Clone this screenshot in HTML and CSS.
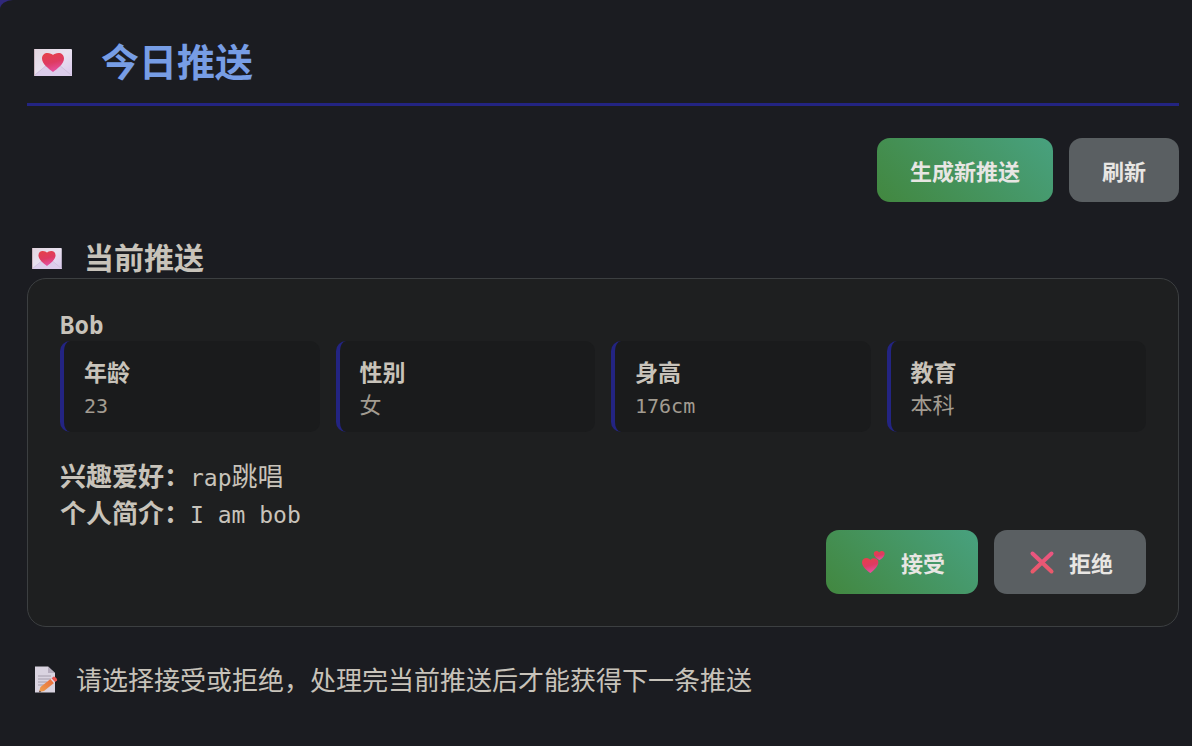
FILE: index.html
```
<!DOCTYPE html>
<html lang="zh-CN">
<head>
    <meta charset="UTF-8">
    <meta name="viewport" content="width=device-width, initial-scale=1.0">
    <title>今日推送</title>
    <link rel="stylesheet" href="styles.css">
</head>
<body>

<!-- 公用的信封图标 -->
<svg class="defs" width="0" height="0" aria-hidden="true">
    <defs>
        <linearGradient id="paper" x1="0" y1="0" x2="1" y2="1">
            <stop offset="0" stop-color="#e2d5df"/>
            <stop offset="0.5" stop-color="#e9e1f0"/>
            <stop offset="1" stop-color="#d9c8ec"/>
        </linearGradient>
        <linearGradient id="heart" x1="0.3" y1="0" x2="0.6" y2="1">
            <stop offset="0" stop-color="#e5404b"/>
            <stop offset="0.5" stop-color="#de3b62"/>
            <stop offset="1" stop-color="#e652a8"/>
        </linearGradient>
        <symbol id="letter" viewBox="0 0 38 27">
            <rect width="38" height="27" rx="1" fill="url(#paper)"/>
            <path d="M0 26 L14 15 H24 L38 26 V27 H0z" fill="#dccdeb"/>
            <path d="M1 26 L14 15 M37 26 L24 15" stroke="#c8bad4" stroke-width="0.7" fill="none"/>
            <path d="M0 0 V27" stroke="#cbb5bf" stroke-width="2"/>
            <path d="M19 23 C15 20 8 15 8 9.500 C8 6 10.500 4 13.500 4 C16 4 18 5 19 6 C20 5 22 4 24.500 4 C27.500 4 30 6 30 9.500 C30 15 23 20 19 23z" fill="url(#heart)"/>
        </symbol>
    </defs>
</svg>

<div class="container">
    <h1 class="page-title">
        <svg class="title-icon" aria-hidden="true"><use href="#letter"/></svg>
        今日推送
    </h1>

    <div class="actions">
        <button type="button" class="btn btn-success">生成新推送</button>
        <button type="button" class="btn btn-secondary">刷新</button>
    </div>

    <h2 class="section-title">
        <svg class="section-icon" aria-hidden="true"><use href="#letter"/></svg>
        当前推送
    </h2>

    <div class="card">
        <h3 class="name">Bob</h3>
        <dl class="info">
            <div class="info-item">
                <dt>年龄</dt>
                <dd><span class="mono">23</span></dd>
            </div>
            <div class="info-item">
                <dt>性别</dt>
                <dd>女</dd>
            </div>
            <div class="info-item">
                <dt>身高</dt>
                <dd><span class="mono">176cm</span></dd>
            </div>
            <div class="info-item">
                <dt>教育</dt>
                <dd>本科</dd>
            </div>
        </dl>

        <div class="detail">
            <p><strong>兴趣爱好：</strong><span class="mono">rap</span>跳唱</p>
            <p><strong>个人简介：</strong><span class="mono">I am bob</span></p>
        </div>

        <div class="actions">
            <button type="button" class="btn btn-success">
                <svg class="btn-icon" viewBox="0 0 30 30" aria-hidden="true">
                    <path d="M11.500 26 C8 24 3 19.500 3 15.500 C3 12.500 5 11 7.500 11 C9.500 11 10.700 12 11.300 13 C12.200 11.700 13.800 11 15.500 11.200 C18 11.500 19.700 13.500 19.300 16 C18.700 19.700 14.500 23.500 11.500 26z" fill="url(#heart)"/>
                    <path d="M20.500 13 C18 11.700 14.800 9.500 14.800 6.800 C14.800 5 16 4 17.500 4 C18.700 4 19.600 4.600 20.100 5.600 C20.800 4.500 22 3.900 23.300 4.100 C25.200 4.400 26 5.900 25.600 7.500 C25 10 22.700 11.800 20.500 13z" fill="url(#heart)"/>
                </svg>
                接受
            </button>
            <button type="button" class="btn btn-secondary">
                <svg class="btn-icon" viewBox="0 0 30 30" aria-hidden="true">
                    <linearGradient id="cross" x1="0" y1="0" x2="0" y2="1">
                        <stop offset="0" stop-color="#ea5580"/>
                        <stop offset="1" stop-color="#e9596a"/>
                    </linearGradient>
                    <path d="M5.500 6.500 L24.500 24.500 M24.500 6.500 L5.500 24.500" stroke="url(#cross)" stroke-width="4" stroke-linecap="round"/>
                </svg>
                拒绝
            </button>
        </div>
    </div>

    <p class="hint">
        <svg class="hint-icon" viewBox="0 0 24 27" aria-hidden="true">
            <linearGradient id="pencil" x1="0" y1="1" x2="1" y2="0">
                <stop offset="0" stop-color="#eda04c"/>
                <stop offset="1" stop-color="#ea6a3c"/>
            </linearGradient>
            <path d="M1 0.500 H14 L21 7 V26.500 H1z" fill="#d9d3e0"/>
            <path d="M14 0.500 L21 7 H14z" fill="#b5acbd"/>
            <path d="M4 10 H17 M4 13 H17 M4 16 H13 M4 19 H10" stroke="#a49dac" stroke-width="1"/>
            <path d="M5 26 L6.500 21 L16.500 13 L20 17 L10 25z" fill="url(#pencil)"/>
            <path d="M16.500 13 L18 11.800 L21.300 15.800 L20 17z" fill="#e6dce6"/>
            <path d="M17.500 12.200 L19.500 10.700 C20.500 10 24 13.500 23 14.500 L21 16z" fill="#e85550"/>
            <path d="M5 26.500 L5.600 24.500 L7.200 26z" fill="#4b3b4c"/>
        </svg>
        请选择接受或拒绝，处理完当前推送后才能获得下一条推送
    </p>
</div>

</body>
</html>
```
FILE: styles.css
```
* {
    margin: 0;
    padding: 0;
    box-sizing: border-box;
}

body {
    background-color: #30287a;
    color: #c8c3ba;
    font-family: "Noto Sans CJK SC", sans-serif;
    font-size: 26px;
}

.defs {
    position: absolute;
}

.container {
    min-height: 100vh;
    padding: 32px 13px 32px 27px;
    background: #1b1c21;
    border-top-left-radius: 13px 9px;
}

.mono {
    font-family: "DejaVu Sans Mono", monospace;
    font-size: 23px;
    line-height: 1;
}

/* 标题 */
.page-title {
    display: flex;
    align-items: center;
    gap: 29px;
    padding: 0 7px 15px;
    margin-bottom: 32px;
    border-bottom: 3px solid #232482;
    color: #779de5;
    font-size: 38px;
    line-height: 56px;
}

.title-icon {
    width: 38px;
    height: 27px;
    margin-top: 4px;
}

.section-title {
    display: flex;
    align-items: center;
    gap: 22px;
    padding: 0 5px 4px;
    margin-top: 36px;
    font-size: 30px;
    line-height: 36px;
}

.section-icon {
    width: 30px;
    height: 21px;
    margin-top: 4px;
}

/* 按钮 */
.actions {
    display: flex;
    justify-content: flex-end;
    gap: 16px;
}

.btn {
    display: flex;
    align-items: center;
    gap: 12px;
    height: 64px;
    padding: 0 33px;
    border: none;
    border-radius: 13px;
    color: #e8e6e3;
    font-family: inherit;
    font-size: 22px;
    font-weight: bold;
    cursor: pointer;
}

.btn-success {
    background: linear-gradient(45deg, #42873f, #48a17f);
}

.btn-secondary {
    background: #5a5f62;
}

.btn-icon {
    width: 30px;
    height: 30px;
}

/* 推送卡片 */
.card {
    padding: 32px;
    background-color: #1e1f20;
    border: 1px solid #3c3f41;
    border-radius: 19px;
}

.name {
    font-family: "DejaVu Sans Mono", monospace;
    font-size: 24px;
    line-height: 30px;
}

.info {
    display: grid;
    grid-template-columns: repeat(4, 1fr);
    gap: 16px;
    margin-bottom: 24px;
}

.info-item {
    padding: 14px 20px;
    background-color: #1a1b1c;
    border-left: 4px solid #232482;
    border-radius: 10px;
}

.info-item dt {
    font-size: 23px;
    font-weight: bold;
    line-height: 33px;
}

.info-item dd {
    color: #a29c91;
    font-size: 22px;
    line-height: 30px;
}

.info-item .mono {
    font-size: 20px;
}

.detail p {
    line-height: 37px;
}

.hint {
    display: flex;
    align-items: center;
    gap: 18px;
    padding-left: 7px;
    margin-top: 32px;
    line-height: 40px;
}

.hint-icon {
    width: 24px;
    height: 27px;
    flex: none;
}
```
